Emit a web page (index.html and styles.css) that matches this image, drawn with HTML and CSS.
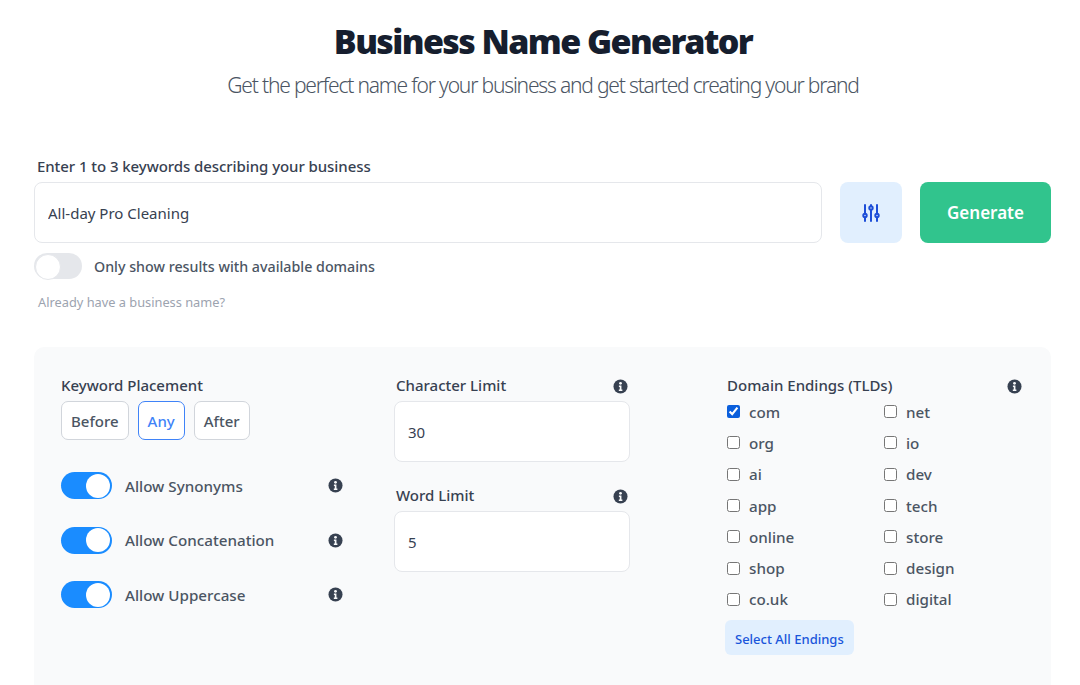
FILE: index.html
```html
<!DOCTYPE html>
<html lang="en">
<head>
  <meta charset="UTF-8" />
  <title>Business Name Generator</title>
  <link rel="stylesheet" href="styles.css">
</head>
<body>
  <svg class="defs" width="0" height="0">
    <symbol id="info" viewBox="0 0 16 16">
      <circle cx="8" cy="8" r="7.5" fill="#374151"/>
      <circle cx="8" cy="4.6" r="1.5" fill="#f9fafb"/>
      <path d="M6.3 7h2.7v4.2h1v1.5H6.2v-1.5h1V8.5h-.9z" fill="#f9fafb"/>
    </symbol>
  </svg>

  <header class="hero">
    <h1>Business Name Generator</h1>
    <p>Get the perfect name for your business and get started creating your brand</p>
  </header>

  <main class="page">
    <label class="keyword-label" for="keywords">Enter 1 to 3 keywords describing your business</label>
    <div class="search-row">
      <input id="keywords" class="text-input grow" type="text" value="All-day Pro Cleaning">
      <button class="filter-btn" aria-label="Filters">
        <svg width="18" height="18" viewBox="0 0 18 18" fill="none" stroke="#1d4ed8" stroke-width="2" stroke-linecap="round">
          <path d="M3 1v8.5M3 13.5V17M9 1v1M9 6v11M15 1v8.5M15 13.5V17"/>
          <circle cx="3" cy="11.5" r="1.7"/>
          <circle cx="9" cy="4" r="1.7"/>
          <circle cx="15" cy="11.5" r="1.7"/>
        </svg>
      </button>
      <button class="generate-btn">Generate</button>
    </div>

    <div class="domain-toggle">
      <span class="switch off"></span>
      <span>Only show results with available domains</span>
    </div>
    <a class="have-name">Already have a business name?</a>

    <section class="panel">
      <div class="col-placement">
        <div class="field-label">Keyword Placement</div>
        <div class="placement-group">
          <button class="placement">Before</button>
          <button class="placement active">Any</button>
          <button class="placement">After</button>
        </div>
        <div class="option-list">
          <div class="option">
            <span class="switch on"></span>
            <span class="option-name">Allow Synonyms</span>
            <svg class="info"><use href="#info"/></svg>
          </div>
          <div class="option">
            <span class="switch on"></span>
            <span class="option-name">Allow Concatenation</span>
            <svg class="info"><use href="#info"/></svg>
          </div>
          <div class="option">
            <span class="switch on"></span>
            <span class="option-name">Allow Uppercase</span>
            <svg class="info"><use href="#info"/></svg>
          </div>
        </div>
      </div>

      <div class="col-limits">
        <div class="limit">
          <div class="label-row">
            <span class="field-label">Character Limit</span>
            <svg class="info"><use href="#info"/></svg>
          </div>
          <input class="text-input limit-input" type="text" value="30">
        </div>
        <div class="limit">
          <div class="label-row">
            <span class="field-label">Word Limit</span>
            <svg class="info"><use href="#info"/></svg>
          </div>
          <input class="text-input limit-input" type="text" value="5">
        </div>
      </div>

      <div class="col-tlds">
        <div class="label-row tld-head">
          <span class="field-label">Domain Endings (TLDs)</span>
          <svg class="info"><use href="#info"/></svg>
        </div>
        <div class="tld-grid">
          <label class="tld"><input type="checkbox" checked>com</label>
          <label class="tld"><input type="checkbox">net</label>
          <label class="tld"><input type="checkbox">org</label>
          <label class="tld"><input type="checkbox">io</label>
          <label class="tld"><input type="checkbox">ai</label>
          <label class="tld"><input type="checkbox">dev</label>
          <label class="tld"><input type="checkbox">app</label>
          <label class="tld"><input type="checkbox">tech</label>
          <label class="tld"><input type="checkbox">online</label>
          <label class="tld"><input type="checkbox">store</label>
          <label class="tld"><input type="checkbox">shop</label>
          <label class="tld"><input type="checkbox">design</label>
          <label class="tld"><input type="checkbox">co.uk</label>
          <label class="tld"><input type="checkbox">digital</label>
        </div>
        <button class="select-all">Select All Endings</button>
      </div>
    </section>
  </main>
</body>
</html>
```

FILE: styles.css
```css
* { box-sizing: border-box; }

html, body { height: 685px; overflow: hidden; }

body {
  margin: 0;
  background: #fff;
  color: #374151;
  font-family: "Noto Sans", "Open Sans", sans-serif;
}

button, input { font-family: inherit; }

.defs { position: absolute; }

.hero {
  padding-top: 18px;
  padding-left: 6px;
  text-align: center;
}

.hero h1 {
  margin: 0;
  font-size: 34px;
  line-height: 46px;
  font-weight: 900;
  letter-spacing: -1.6px;
  color: #161e2e;
}

.hero p {
  margin: 0;
  margin-top: 3px;
  font-size: 21px;
  line-height: 36px;
  font-weight: 300;
  letter-spacing: -1.19px;
  color: #4b5563;
}

.page {
  padding: 0 29px 0 34px;
}

.keyword-label {
  display: block;
  margin-top: 53px;
  padding-left: 3px;
  font-size: 15px;
  line-height: 20px;
  font-weight: 500;
  letter-spacing: -0.07px;
}

.search-row {
  display: flex;
  gap: 18px;
  margin-top: 6px;
}

.text-input {
  height: 61px;
  padding: 0 13px;
  border: 1px solid #e5e7eb;
  border-radius: 8px;
  background: #fff;
  color: #374151;
  font-size: 15px;
}

.grow { flex: 1; min-width: 0; }

.filter-btn {
  display: flex;
  align-items: center;
  justify-content: center;
  width: 62px;
  height: 61px;
  border: 0;
  border-radius: 8px;
  background: #e1effe;
}

.generate-btn {
  width: 131px;
  height: 61px;
  border: 0;
  border-radius: 8px;
  background: #31c48d;
  color: #fff;
  font-size: 17px;
  font-weight: 600;
}

.domain-toggle {
  display: flex;
  align-items: center;
  gap: 12px;
  margin-top: 10px;
  font-size: 14.25px;
  font-weight: 500;
  color: #4b5563;
}

.switch {
  position: relative;
  display: block;
  flex: none;
  border-radius: 14px;
}

.switch::after {
  content: "";
  position: absolute;
  border-radius: 50%;
  background: #fff;
}

.switch.off {
  width: 48px;
  height: 26px;
  background: #e5e7eb;
}

.switch.off::after {
  left: 1px;
  top: 1px;
  width: 24px;
  height: 24px;
  border: 1px solid #e5e7eb;
}

.switch.on {
  width: 51px;
  height: 27px;
  background: #1a8cff;
}

.switch.on::after {
  right: 2px;
  top: 1.5px;
  width: 24px;
  height: 24px;
}

.have-name {
  display: block;
  margin-top: 14px;
  padding-left: 4px;
  font-size: 12.8px;
  line-height: 18px;
  color: #9ca3af;
}

.panel {
  display: grid;
  grid-template-columns: 282px 236px 1fr;
  column-gap: 51px;
  height: 360px;
  margin-top: 36px;
  padding: 27px 29px 0 27px;
  border-radius: 10px;
  background: #f9fafb;
}

.field-label {
  font-size: 15px;
  line-height: 22px;
  font-weight: 500;
}

.placement-group {
  display: flex;
  gap: 9px;
  margin-top: 5px;
}

.placement {
  height: 39px;
  padding: 0 9px;
  border: 1px solid #d1d5db;
  border-radius: 7px;
  background: #fff;
  color: #4b5563;
  font-size: 15px;
  font-weight: 500;
}

.placement.active {
  border-color: #3f83f8;
  color: #3f83f8;
}

.option-list {
  display: flex;
  flex-direction: column;
  gap: 27.5px;
  margin-top: 32px;
}

.option {
  display: flex;
  align-items: center;
  gap: 13px;
  font-size: 15.2px;
  font-weight: 500;
  color: #4b5563;
}

.option-name { flex: 1; }

.info {
  flex: none;
  width: 15px;
  height: 15px;
}

.col-limits {
  display: flex;
  flex-direction: column;
  gap: 22px;
}

.label-row {
  display: flex;
  align-items: center;
  justify-content: space-between;
  padding: 0 2px;
  height: 22px;
}

.label-row .info { margin-top: 3px; }

.limit-input {
  display: block;
  width: 100%;
  height: 61px;
  margin-top: 5px;
}

.col-tlds { margin-left: 46px; }

.tld-head { padding: 0; width: 295px; }

.tld-grid {
  display: grid;
  grid-template-columns: 157px 1fr;
  grid-auto-rows: 31.3px;
}

.tld {
  display: flex;
  align-items: center;
  gap: 9px;
  font-size: 15.2px;
  font-weight: 500;
  color: #4b5563;
}

.tld input {
  margin: 0;
  width: 13px;
  height: 13px;
  accent-color: #0b5fdc;
}

.select-all {
  display: block;
  height: 35px;
  margin-top: 5px;
  margin-left: -2px;
  padding: 3px 10px 0;
  border: 0;
  border-radius: 6px;
  background: #e1effe;
  color: #1a56db;
  font-size: 13px;
  font-weight: 500;
}
```
